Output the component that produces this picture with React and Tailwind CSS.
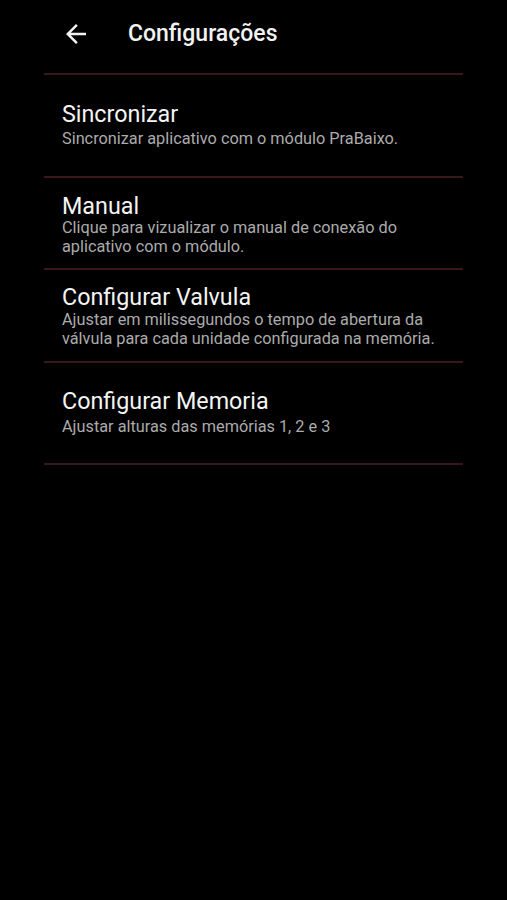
const items = [
  {
    title: "Sincronizar",
    desc: "Sincronizar aplicativo com o módulo PraBaixo.",
    box: "h-[103px] pt-[26px]",
    gap: "mt-[1px]",
  },
  {
    title: "Manual",
    desc: "Clique para vizualizar o manual de conexão do aplicativo com o módulo.",
    box: "h-[92px] pt-[15px]",
    gap: "-mt-[2px]",
  },
  {
    title: "Configurar Valvula",
    desc: "Ajustar em milissegundos o tempo de abertura da válvula para cada unidade configurada na memória.",
    box: "h-[93px] pt-[14px]",
    gap: "-mt-[1px]",
  },
  {
    title: "Configurar Memoria",
    desc: "Ajustar alturas das memórias 1, 2 e 3",
    box: "h-[102px] pt-[25px]",
    gap: "mt-[2px]",
  },
];

export default function App() {
  return (
    <div className="min-h-[900px] w-[507px] bg-black font-['Roboto',sans-serif]">
      <header className="flex h-[68px] items-center pl-[61px]">
        <svg viewBox="0 0 24 24" className="h-[30px] w-[30px] fill-[#f2f2f2]">
          <path d="M20 11H7.83l5.59-5.59L12 4l-8 8 8 8 1.41-1.41L7.83 13H20v-2z" />
        </svg>
        <h1 className="ml-[37px] text-[23px] font-medium text-[#f2f2f2]">Configurações</h1>
      </header>

      <div className="mx-[44px] mt-[5px] border-t-2 border-[#3a171b]">
        {items.map((item) => (
          <div key={item.title} className={`${item.box} border-b-2 border-[#3a171b] pl-[18px] pr-[10px]`}>
            <div className="text-[23.3px] leading-[27px] text-[#f4f4f4]">{item.title}</div>
            <p className={`${item.gap} text-[16.3px] leading-[19px] text-[#ababab]`}>{item.desc}</p>
          </div>
        ))}
      </div>
    </div>
  );
}
